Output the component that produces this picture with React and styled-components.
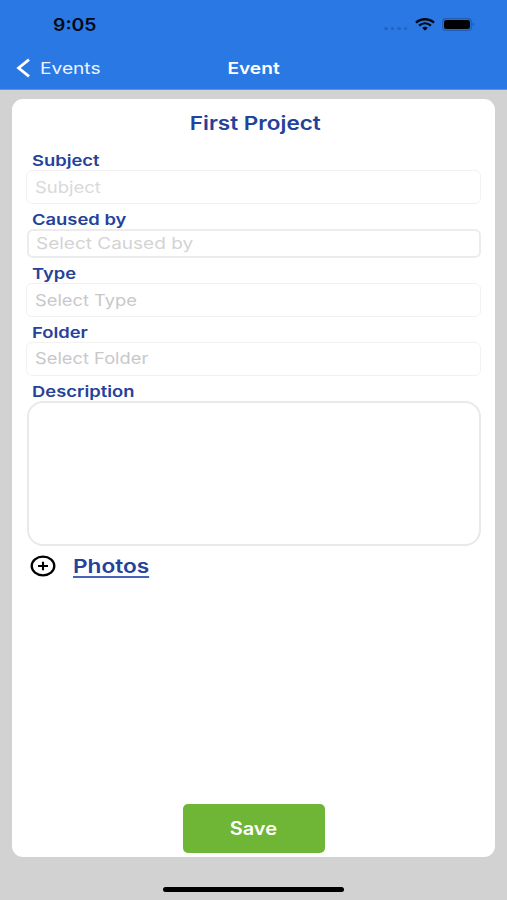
import styled, { createGlobalStyle } from "styled-components";

const fields = [
  { label: "Subject", placeholder: "Subject", tone: "#d9d9dc", scale: 1.19 },
  { label: "Caused by", placeholder: "Select Caused by", compact: true, tone: "#d3d3d5", scale: 1.225 },
  { label: "Type", placeholder: "Select Type", tone: "#c8c8ca", scale: 1.18 },
  { label: "Folder", placeholder: "Select Folder", tone: "#c8c8ca", scale: 1.18 },
];

const App = () => {
  return (
    <Screen>
      <GlobalStyle />

      <Header>
        <StatusBar>
          <Time>
            <Wide $scale={1.14}>9:05</Wide>
          </Time>
          <StatusIcons>
            <Dots>
              <Dot />
              <Dot />
              <Dot />
              <Dot />
            </Dots>
            <WifiIcon />
            <BatteryIcon />
          </StatusIcons>
        </StatusBar>

        <NavBar>
          <BackLink>
            <svg width="15" height="20" viewBox="0 0 15 20" fill="none">
              <path d="M14 1.7 L3.6 10 L14 18.3" stroke="#fff" strokeWidth="2.8" />
            </svg>
            <Wide $scale={1.16}>Events</Wide>
          </BackLink>
          <NavTitle>
            <Wide $scale={1.16} $center>
              Event
            </Wide>
          </NavTitle>
          <div />
        </NavBar>
      </Header>

      <Card>
        <ProjectName>
          <Wide $scale={1.185} $center>
            First Project
          </Wide>
        </ProjectName>

        {fields.map((field) => (
          <Field key={field.label} $compact={field.compact}>
            <Label>
              <Wide $scale={1.225}>{field.label}</Wide>
            </Label>
            <Select $compact={field.compact} $tone={field.tone}>
              <Wide $scale={field.scale}>{field.placeholder}</Wide>
            </Select>
          </Field>
        ))}

        <Label>
          <Wide $scale={1.225}>Description</Wide>
        </Label>
        <Description aria-label="Description" />

        <PhotosRow>
          <PlusIcon />
          <PhotosLink>
            <Wide $scale={1.19}>Photos</Wide>
          </PhotosLink>
        </PhotosRow>

        <SaveButton>
          <Wide $scale={1.11} $center>
            Save
          </Wide>
        </SaveButton>
      </Card>

      <HomeIndicator />
    </Screen>
  );
};

const WifiIcon = () => (
  <svg width="20" height="13" viewBox="0 0 20 13" fill="none" stroke="#020914">
    <path d="M1 4.6 C6 0.1 14 0.1 19 4.6" strokeWidth="2.4" />
    <path d="M4.1 7.7 C7.6 4.7 12.4 4.7 15.9 7.7" strokeWidth="2.2" />
    <path d="M7.2 9.8 Q10 7.8 12.8 9.8 L10.6 12.2 H9.4 Z" fill="#020914" stroke="none" />
  </svg>
);

const BatteryIcon = () => (
  <svg width="33" height="13" viewBox="0 0 33 13">
    <rect x="0.7" y="0.7" width="28.6" height="11.6" rx="3.4" fill="none" stroke="#225cb4" strokeWidth="1.2" />
    <rect x="2" y="2" width="26" height="9" rx="2.2" fill="#000205" />
    <path d="M30.6 4.6 Q32.3 5.2 32.3 6.5 Q32.3 7.8 30.6 8.4 Z" fill="#225cb4" />
  </svg>
);

const PlusIcon = () => (
  <svg width="26" height="22" viewBox="0 0 26 22" fill="none" stroke="#000">
    <ellipse cx="13" cy="11" rx="11.3" ry="9.3" strokeWidth="2.3" />
    <path d="M8 11 H18 M13 6.8 V15.2" strokeWidth="2.1" />
  </svg>
);

const GlobalStyle = createGlobalStyle`
  * {
    box-sizing: border-box;
  }

  body {
    margin: 0;
    font-family: Inter, "Liberation Sans", sans-serif;
  }
`;

const Screen = styled.div`
  display: flex;
  flex-direction: column;
  height: 900px;
  width: 507px;
  background: #d2d2d2;
`;

// stretches the letters sideways without making them taller
const Wide = styled.span`
  display: inline-block;
  white-space: nowrap;
  transform: scaleX(${(props) => props.$scale});
  transform-origin: ${(props) => (props.$center ? "center" : "left")};
`;

const Header = styled.header`
  flex: none;
  height: 90px;
  background: #2978e4;
  border-bottom: 1px solid #5f94dc;
`;

const StatusBar = styled.div`
  display: flex;
  justify-content: space-between;
  align-items: center;
  height: 48px;
  padding: 1px 32px 0 53px;
`;

const Time = styled.div`
  font-size: 17px;
  font-weight: 600;
  color: #020914;
`;

const StatusIcons = styled.div`
  display: flex;
  align-items: center;
`;

const Dots = styled.div`
  display: flex;
  gap: 3px;
  margin: 7px 8px 0 0;

  & + svg {
    margin-right: 7px;
  }
`;

const Dot = styled.span`
  width: 3.5px;
  height: 3px;
  border-radius: 50%;
  background: #2464bd;
`;

const NavBar = styled.nav`
  display: grid;
  grid-template-columns: 1fr auto 1fr;
  align-items: center;
  height: 40px;
  padding: 0 15px;
  color: #fff;
  font-size: 16.5px;
`;

const BackLink = styled.div`
  display: flex;
  align-items: center;
  gap: 10px;
  color: #edf4ff;
`;

const NavTitle = styled.div`
  font-weight: 600;
`;

const Card = styled.main`
  flex: none;
  display: flex;
  flex-direction: column;
  width: 483px;
  height: 758px;
  margin: 9px 0 0 12px;
  padding: 0 14px 4px;
  border-radius: 11px;
  background: #fff;
`;

const ProjectName = styled.h1`
  margin: 0;
  height: 53px;
  padding-left: 3px;
  line-height: 49px;
  text-align: center;
  font-size: 19px;
  font-weight: 600;
  color: #24429a;
`;

const Field = styled.div`
  height: ${(props) => (props.$compact ? "54.5px" : "58.7px")};
`;

const Label = styled.div`
  height: 18px;
  padding-left: 6px;
  line-height: 18px;
  font-size: 15px;
  font-weight: 600;
  color: #24429a;
`;

const Select = styled.div`
  display: flex;
  align-items: center;
  height: ${(props) => (props.$compact ? "29px" : "34px")};
  margin-left: ${(props) => (props.$compact ? "1px" : "0")};
  padding-left: ${(props) => (props.$compact ? "7px" : "8px")};
  border: ${(props) => (props.$compact ? "2px solid #ececec" : "1px solid #f2f2f2")};
  border-radius: 6px;
  font-size: 15.5px;
  color: ${(props) => props.$tone};
`;

const Description = styled.textarea`
  height: 145.5px;
  margin-left: 1px;
  border: 2px solid #e9e9e9;
  border-radius: 16px;
  background: #fff;
  resize: none;
  outline: none;
`;

const PhotosRow = styled.div`
  display: flex;
  align-items: center;
  height: 39px;
  padding-left: 4px;
  gap: 17px;
`;

const PhotosLink = styled.div`
  padding-top: 1px;
  font-size: 19px;
  font-weight: 600;
  color: #24429a;

  span {
    border-bottom: 2px solid #4864b8;
    padding-top: 2px;
    line-height: 19px;
  }
`;

const SaveButton = styled.button`
  width: 142px;
  height: 49px;
  margin: auto auto 0;
  border: none;
  border-radius: 5px;
  background: #70b636;
  color: #fff;
  font-family: inherit;
  font-size: 18px;
  font-weight: 600;
`;

const HomeIndicator = styled.div`
  width: 181px;
  height: 5px;
  margin: 30px auto 0;
  border-radius: 3px;
  background: #000;
`;

export default App;
